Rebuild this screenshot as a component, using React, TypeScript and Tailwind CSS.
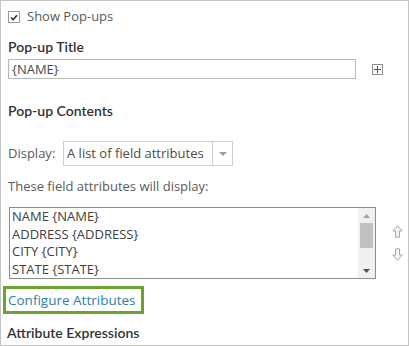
import React from 'react';

const heading = { fontFamily: 'Lato, "Open Sans", sans-serif' };
const body = { fontFamily: '"Open Sans", Lato, sans-serif' };

const fields = ['NAME {NAME}', 'ADDRESS {ADDRESS}', 'CITY {CITY}', 'STATE {STATE}'];

const Checkbox: React.FC = () => (
  <span className="w-[12px] h-[12px] border border-[#9a9a9a] bg-white flex items-center justify-center">
    <svg width="8" height="7" viewBox="0 0 8 7">
      <path d="M1 3.5 L3.2 5.6 L7 1.2" fill="none" stroke="#333" strokeWidth="1.6" />
    </svg>
  </span>
);

const PlusBox: React.FC = () => (
  <span className="w-[11px] h-[11px] border border-[#8e8e8e] flex items-center justify-center">
    <svg width="9" height="9" viewBox="0 0 9 9">
      <path d="M4.5 1 V8 M1 4.5 H8" stroke="#555" strokeWidth="1" />
    </svg>
  </span>
);

const OutlineArrow: React.FC<{ down?: boolean }> = ({ down }) => (
  <svg width="11" height="13" viewBox="0 0 11 13" className={down ? 'rotate-180' : ''}>
    <path d="M5.5 0.8 L10.2 6 H7.5 V12.2 H3.5 V6 H0.8 Z" fill="#f4f4f4" stroke="#a8a8a8" strokeWidth="1" />
  </svg>
);

const App: React.FC = () => {
  return (
    <div style={body} className="w-[409px] h-[346px] border border-[#c4c4c4] bg-white overflow-hidden">
      <div className="pt-[6px] pl-[7px] flex flex-col">
        {/* Show pop-ups */}
        <div className="h-[20px] flex items-center gap-[7px]">
          <Checkbox />
          <span className="text-[13px] text-[#5a5a5a]">Show Pop-ups</span>
        </div>

        <div style={heading} className="mt-[10px] h-[20px] leading-[20px] text-[14px] font-semibold text-[#323232]">Pop-up Title</div>

        <div className="mt-[2px] h-[20px] flex items-center">
          <div className="w-[348px] h-[20px] border border-[#b8b8b8] text-[13px] text-[#4a4a4a] leading-[18px] pl-[3px]">
            {'{NAME}'}
          </div>
          <span className="ml-[16px]">
            <PlusBox />
          </span>
        </div>

        <div style={heading} className="mt-[22px] h-[20px] leading-[20px] text-[14px] font-semibold text-[#323232]">Pop-up Contents</div>

        {/* Display select */}
        <div className="mt-[20px] h-[25px] flex items-center">
          <span className="text-[13px] text-[#5a5a5a] w-[55px]">Display:</span>
          <div className="h-[25px] w-[170px] border border-[#cfcfcf] flex items-stretch">
            <span className="flex-1 pl-[3px] text-[13px] text-[#4a4a4a] leading-[23px] whitespace-nowrap">A list of field attributes</span>
            <span className="w-[20px] border-l border-[#cfcfcf] flex items-center justify-center">
              <svg width="8" height="4" viewBox="0 0 8 4">
                <path d="M0 0 H8 L4 4 Z" fill="#9a9a9a" />
              </svg>
            </span>
          </div>
        </div>

        <div className="mt-[10px] h-[20px] leading-[20px] text-[13px] text-[#5a5a5a]">These field attributes will display:</div>

        {/* Field list */}
        <div className="mt-[11px] flex items-center">
          <div className="ml-[1px] w-[367px] h-[72px] border border-[#8c8c8c] flex">
            <div className="flex-1 pl-[2px] pt-[0px] text-[13px] text-[#404040] leading-[17.7px]">
              {fields.map((f) => (
                <div key={f}>{f}</div>
              ))}
            </div>
            <div className="w-[17px] bg-[#f0f0f0] flex flex-col items-center">
              <div className="h-[15px] flex items-center justify-center">
                <svg width="7" height="4" viewBox="0 0 7 4">
                  <path d="M0 4 H7 L3.5 0 Z" fill="#a3a3a3" />
                </svg>
              </div>
              <div className="w-[13px] h-[25px] bg-[#c1c1c1]" />
              <div className="flex-1" />
              <div className="h-[15px] flex items-center justify-center">
                <svg width="7" height="4" viewBox="0 0 7 4">
                  <path d="M0 0 H7 L3.5 4 Z" fill="#505050" />
                </svg>
              </div>
            </div>
          </div>
          <div className="ml-[16px] flex flex-col gap-[10px]">
            <OutlineArrow />
            <OutlineArrow down />
          </div>
        </div>

        {/* Configure attributes */}
        <div className="mt-[7px] -ml-[5px] w-[141px] h-[28px] border-[3px] border-[#6aa330] flex items-center pl-[2px]">
          <span className="text-[13.5px] text-[#2c7fa6] whitespace-nowrap">Configure Attributes</span>
        </div>

        <div style={heading} className="mt-[9px] -ml-[1px] h-[20px] leading-[20px] text-[14px] font-semibold text-[#323232]">Attribute Expressions</div>
      </div>
    </div>
  );
};

export default App;
